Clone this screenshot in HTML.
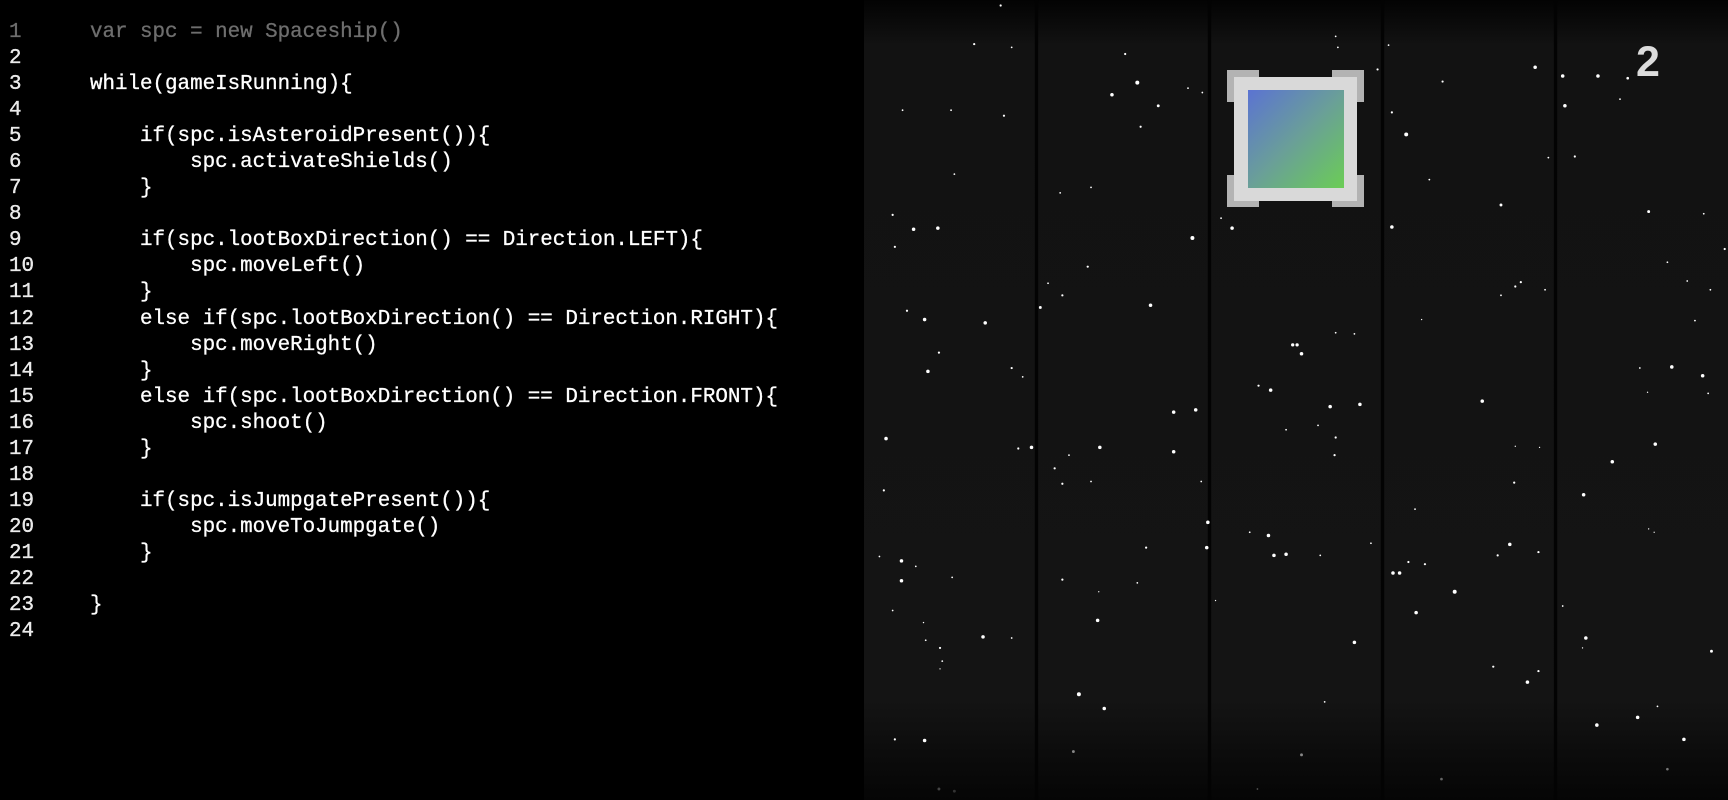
<!DOCTYPE html>
<html><head><meta charset="utf-8"><style>
html,body{margin:0;padding:0;background:#000;width:1728px;height:800px;overflow:hidden}
#code{position:absolute;left:0;top:20px;font-family:"Liberation Mono",monospace;font-size:20.85px;line-height:26.05px;color:#fff;white-space:pre;-webkit-text-stroke:0.3px #fff}
.ln{display:inline-block;width:90px;padding-left:9px;box-sizing:border-box;color:#e8e8e8}
.g{color:#6e6e6e;-webkit-text-stroke:0.3px #6e6e6e}
#panel{position:absolute;left:864px;top:0;width:864px;height:800px;background:linear-gradient(#030303 0px,#121212 45px,#141414 700px,#050505 800px)}
</style></head><body>
<div id="code"><span class="ln g">1</span><span class="g">var spc = new Spaceship()</span>
<span class="ln">2</span>
<span class="ln">3</span>while(gameIsRunning){
<span class="ln">4</span>
<span class="ln">5</span>    if(spc.isAsteroidPresent()){
<span class="ln">6</span>        spc.activateShields()
<span class="ln">7</span>    }
<span class="ln">8</span>
<span class="ln">9</span>    if(spc.lootBoxDirection() == Direction.LEFT){
<span class="ln">10</span>        spc.moveLeft()
<span class="ln">11</span>    }
<span class="ln">12</span>    else if(spc.lootBoxDirection() == Direction.RIGHT){
<span class="ln">13</span>        spc.moveRight()
<span class="ln">14</span>    }
<span class="ln">15</span>    else if(spc.lootBoxDirection() == Direction.FRONT){
<span class="ln">16</span>        spc.shoot()
<span class="ln">17</span>    }
<span class="ln">18</span>
<span class="ln">19</span>    if(spc.isJumpgatePresent()){
<span class="ln">20</span>        spc.moveToJumpgate()
<span class="ln">21</span>    }
<span class="ln">22</span>
<span class="ln">23</span>}
<span class="ln">24</span></div>
<div id="panel">
<svg width="864" height="800" viewBox="784 0 784 726" preserveAspectRatio="none" style="position:absolute;left:0;top:0">
<g fill="#030303"><rect x="939" y="0" width="3" height="726"/><rect x="1096" y="0" width="3" height="726"/><rect x="1253" y="0" width="3" height="726"/><rect x="1410" y="0" width="3" height="726"/></g>
<g fill="#fff">
<g id="s">
<circle cx="908" cy="5" r="1"/><circle cx="884" cy="40" r="1"/><circle cx="918" cy="43" r="0.8"/><circle cx="1021" cy="49" r="1"/><circle cx="1078" cy="80" r="0.8"/><circle cx="1091" cy="84" r="0.8"/><circle cx="1035" cy="115" r="1"/><circle cx="819" cy="100" r="0.8"/><circle cx="863" cy="100" r="0.8"/><circle cx="911" cy="105" r="1"/><circle cx="866" cy="158" r="0.8"/><circle cx="962" cy="175" r="0.8"/><circle cx="990" cy="170" r="0.8"/><circle cx="810" cy="195" r="1"/><circle cx="812" cy="224" r="1"/><circle cx="1108" cy="198" r="0.8"/><circle cx="987" cy="242" r="1"/><circle cx="951" cy="257" r="0.8"/><circle cx="964" cy="268" r="1"/><circle cx="944" cy="279" r="1.3"/><circle cx="823" cy="282" r="1"/><circle cx="852" cy="320" r="1"/><circle cx="918" cy="334" r="1"/><circle cx="928" cy="342" r="0.8"/><circle cx="1212" cy="33" r="0.8"/><circle cx="1214" cy="43" r="0.8"/><circle cx="1260" cy="41" r="0.8"/><circle cx="1250" cy="63" r="1"/><circle cx="1309" cy="74" r="1"/><circle cx="1263" cy="102" r="1"/><circle cx="1297" cy="163" r="0.8"/><circle cx="1477" cy="71" r="1.2"/><circle cx="1470" cy="90" r="0.8"/><circle cx="1429" cy="142" r="1"/><circle cx="1405" cy="143" r="0.8"/><circle cx="1546" cy="194" r="0.8"/><circle cx="1565" cy="226" r="1"/><circle cx="1513" cy="238" r="0.8"/><circle cx="1531" cy="255" r="0.8"/><circle cx="1552" cy="263" r="0.8"/><circle cx="1380" cy="256" r="1"/><circle cx="1375" cy="260" r="1"/><circle cx="1362" cy="268" r="0.8"/><circle cx="1402" cy="263" r="0.8"/><circle cx="1538" cy="291" r="0.8"/><circle cx="1212" cy="302" r="0.8"/><circle cx="1229" cy="303" r="0.8"/><circle cx="1142" cy="350" r="1"/><circle cx="1196" cy="386" r="0.8"/><circle cx="1212" cy="397" r="1"/><circle cx="1211" cy="413" r="1"/><circle cx="1167" cy="390" r="0.8"/><circle cx="924" cy="407" r="1"/><circle cx="970" cy="413" r="0.8"/><circle cx="957" cy="425" r="1"/><circle cx="964" cy="439" r="1"/><circle cx="990" cy="437" r="0.8"/><circle cx="802" cy="445" r="1"/><circle cx="1090" cy="437" r="0.8"/><circle cx="1040" cy="497" r="1"/><circle cx="1134" cy="483" r="0.8"/><circle cx="1198" cy="504" r="0.8"/><circle cx="1244" cy="493" r="0.8"/><circle cx="1278" cy="510" r="1"/><circle cx="1293" cy="512" r="1"/><circle cx="1284" cy="462" r="0.8"/><circle cx="1202" cy="637" r="0.8"/><circle cx="1374" cy="438" r="1"/><circle cx="1488" cy="334" r="0.8"/><circle cx="1550" cy="357" r="0.8"/><circle cx="1495" cy="356" r="0.6"/><circle cx="1375" cy="405" r="0.6"/><circle cx="1397" cy="406" r="0.6"/><circle cx="1359" cy="504" r="1"/><circle cx="1396" cy="501" r="1"/><circle cx="1418" cy="550" r="0.8"/><circle cx="1436" cy="588" r="0.6"/><circle cx="1553" cy="591" r="1.3"/><circle cx="1396" cy="609" r="1"/><circle cx="1355" cy="605" r="1"/><circle cx="1504" cy="641" r="0.8"/><circle cx="1513" cy="698" r="1.2" fill="#777"/><circle cx="1308" cy="707" r="1.2" fill="#666"/><circle cx="1181" cy="685" r="1.3" fill="#888"/><circle cx="974" cy="682" r="1.3" fill="#888"/><circle cx="1032" cy="529" r="0.8"/><circle cx="997" cy="537" r="0.6"/><circle cx="964" cy="526" r="1"/><circle cx="831" cy="514" r="0.8"/><circle cx="864" cy="524" r="0.8"/><circle cx="810" cy="554" r="0.8"/><circle cx="838" cy="565" r="0.6"/><circle cx="840" cy="581" r="0.8"/><circle cx="853" cy="588" r="1"/><circle cx="855" cy="600" r="0.8"/><circle cx="853" cy="607" r="0.6"/><circle cx="918" cy="579" r="0.8"/><circle cx="812" cy="671" r="1"/><circle cx="852" cy="716" r="1.3" fill="#444"/><circle cx="866" cy="718" r="1.3" fill="#333"/><circle cx="1103" cy="545" r="0.6"/><circle cx="1141" cy="716" r="0.8" fill="#555"/><circle cx="1496" cy="480" r="0.6"/><circle cx="1501" cy="483" r="0.6"/><circle cx="798" cy="505" r="0.8"/><circle cx="1290" cy="290" r="0.6"/>
</g>
<g>
<circle cx="1032" cy="75" r="1.8"/><circle cx="1082" cy="216" r="1.8"/><circle cx="1118" cy="207" r="1.6"/><circle cx="1044" cy="277" r="1.6"/><circle cx="894" cy="293" r="1.6"/><circle cx="842" cy="337" r="1.6"/><circle cx="1276" cy="122" r="1.8"/><circle cx="1393" cy="61" r="1.6"/><circle cx="1418" cy="69" r="1.6"/><circle cx="1450" cy="69" r="1.6"/><circle cx="1420" cy="96" r="1.6"/><circle cx="1263" cy="206" r="1.6"/><circle cx="1173" cy="313" r="1.5"/><circle cx="1177" cy="313" r="1.5"/><circle cx="1181" cy="321" r="1.6"/><circle cx="1153" cy="354" r="1.6"/><circle cx="1207" cy="369" r="1.6"/><circle cx="1234" cy="367" r="1.6"/><circle cx="1065" cy="374" r="1.6"/><circle cx="1085" cy="372" r="1.6"/><circle cx="1065" cy="410" r="1.6"/><circle cx="998" cy="406" r="1.6"/><circle cx="936" cy="406" r="1.6"/><circle cx="804" cy="398" r="1.6"/><circle cx="1096" cy="474" r="1.6"/><circle cx="1095" cy="497" r="1.6"/><circle cx="1151" cy="486" r="1.6"/><circle cx="1156" cy="504" r="1.6"/><circle cx="1167" cy="503" r="1.6"/><circle cx="1264" cy="520" r="1.6"/><circle cx="1270" cy="520" r="1.6"/><circle cx="1320" cy="537" r="1.8"/><circle cx="1285" cy="556" r="1.6"/><circle cx="1229" cy="583" r="1.6"/><circle cx="1345" cy="364" r="1.6"/><circle cx="1437" cy="449" r="1.6"/><circle cx="1463" cy="419" r="1.6"/><circle cx="1502" cy="403" r="1.6"/><circle cx="1517" cy="333" r="1.6"/><circle cx="1545" cy="341" r="1.6"/><circle cx="1370" cy="494" r="1.6"/><circle cx="1439" cy="579" r="1.6"/><circle cx="1386" cy="619" r="1.6"/><circle cx="1486" cy="651" r="1.6"/><circle cx="1449" cy="658" r="1.6"/><circle cx="1528" cy="671" r="1.6"/><circle cx="979" cy="630" r="1.8"/><circle cx="1002" cy="643" r="1.6"/><circle cx="996" cy="563" r="1.6"/><circle cx="818" cy="509" r="1.6"/><circle cx="818" cy="527" r="1.6"/><circle cx="892" cy="578" r="1.6"/><circle cx="839" cy="672" r="1.6"/><circle cx="829" cy="208" r="1.6"/><circle cx="851" cy="207" r="1.6"/><circle cx="1009" cy="86" r="1.6"/><circle cx="839" cy="290" r="1.6"/><circle cx="1362" cy="186" r="1.3"/><circle cx="1496" cy="192" r="1.3"/><circle cx="1051" cy="96" r="1.3"/>
</g>
</g>
</svg>
<div style="position:absolute;left:363px;top:70px;width:137px;height:137px">
  <div style="position:absolute;left:0;top:0;width:32px;height:32px;background:#b3b3b3"></div>
  <div style="position:absolute;right:0;top:0;width:32px;height:32px;background:#b3b3b3"></div>
  <div style="position:absolute;left:0;bottom:0;width:32px;height:32px;background:#b3b3b3"></div>
  <div style="position:absolute;right:0;bottom:0;width:32px;height:32px;background:#b3b3b3"></div>
  <div style="position:absolute;left:7px;top:7px;width:123px;height:124px;background:#d9d9d9"></div>
  <div style="position:absolute;left:21px;top:20px;width:96px;height:98px;background:linear-gradient(135deg,#5b73d2,#6a9f98 50%,#6bcd55)"></div>
</div>
<div style="position:absolute;left:772px;top:41px;font-family:'Liberation Sans',sans-serif;font-weight:bold;font-size:43px;line-height:43px;color:#dcdcdc">2</div>
</div>
</body></html>
